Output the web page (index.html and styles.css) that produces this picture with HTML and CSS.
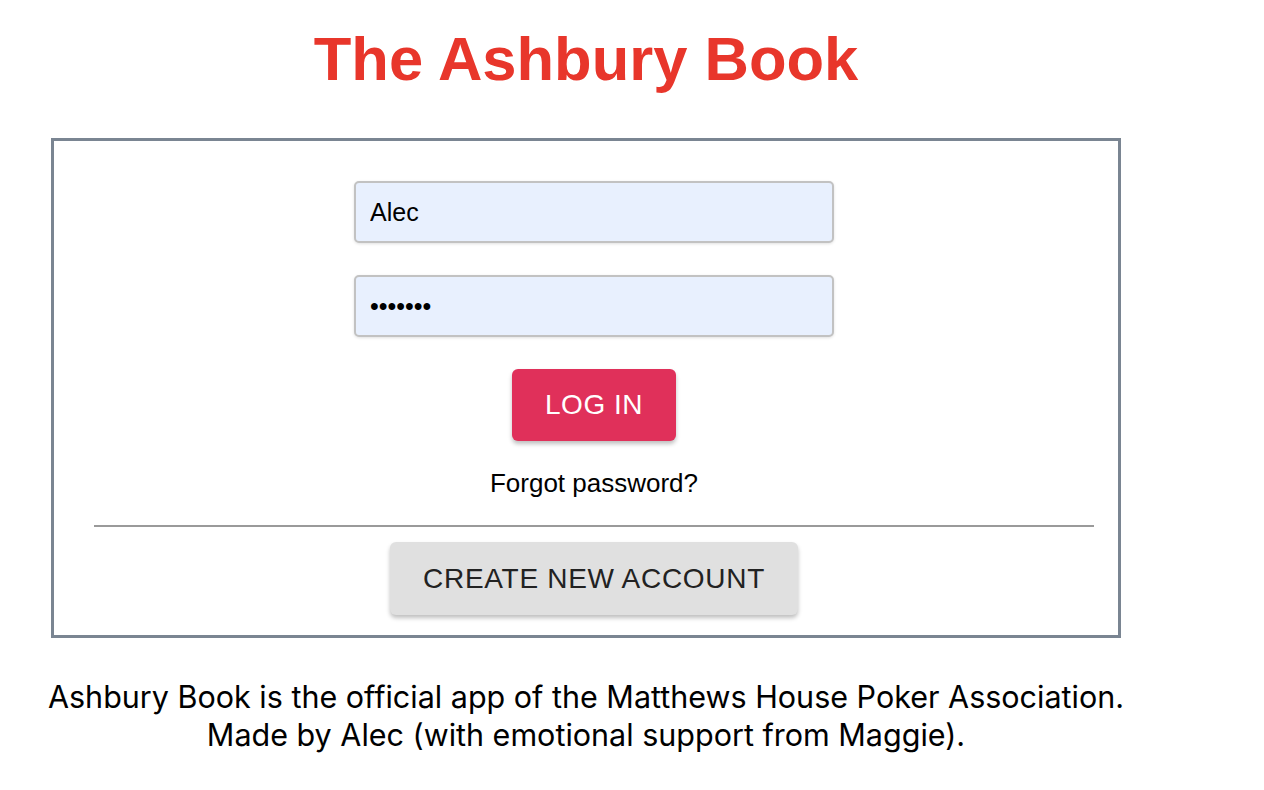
FILE: index.html
```html
<!DOCTYPE html>
<html>
<head>
<meta charset="utf-8">
<link rel="stylesheet" href="styles.css">
</head>
<body>
<div class="page">
  <h1 class="title">The Ashbury Book</h1>
  <div class="card">
    <div class="inner">
      <input class="field" type="text" value="Alec">
      <input class="field pw" type="password" value="1234567">
      <button class="btn-login">LOG IN</button>
      <a class="forgot">Forgot password?</a>
      <hr class="divider">
      <button class="btn-create">CREATE NEW ACCOUNT</button>
    </div>
  </div>
  <p class="footer">Ashbury Book is the official app of the Matthews House Poker Association.<br>Made by Alec (with emotional support from Maggie).</p>
</div>
</body>
</html>
```
FILE: styles.css
```css
html, body { margin: 0; padding: 0; background: #fff; }
body { font-family: "Liberation Sans", Arial, sans-serif; color: #000; }
.page { width: 1172px; display: flex; flex-direction: column; align-items: center; }
.title {
  margin: 23px 0 43px;
  font-size: 61.5px;
  line-height: 72px;
  font-weight: bold;
  color: #e8362b;
}
.card {
  width: 1064px;
  border: 3px solid #7a8592;
  box-sizing: content-box;
}
.inner {
  width: 1000px;
  margin-left: 40px;
  padding: 40px 0 20px;
  display: flex;
  flex-direction: column;
  align-items: center;
}
.field {
  width: 480px;
  height: 62px;
  box-sizing: border-box;
  border: 2px solid #c2c2c2;
  border-radius: 5px;
  background: #e8f0fe;
  padding: 0 14px;
  font-family: "Liberation Sans", Arial, sans-serif;
  font-size: 25px;
  color: #000;
  margin: 0 0 32px;
  box-shadow: 0 1px 3px rgba(0,0,0,0.12);
  outline: none;
}
.pw { font-size: 25px; letter-spacing: 0; }
.btn-login {
  width: 164px;
  height: 72px;
  border: none;
  border-radius: 6px;
  background: #e0305a;
  color: #fff;
  font-family: "Liberation Sans", Arial, sans-serif;
  font-size: 28px;
  letter-spacing: 0.5px;
  box-shadow: 0 3px 4px rgba(0,0,0,0.25);
  margin: 0;
  padding: 0;
}
.forgot {
  margin-top: 27px;
  font-size: 26px;
  line-height: 30px;
  color: #000;
}
.divider {
  width: 1000px;
  margin: 27px 0 15px;
  border: none;
  height: 2px;
  background: #9a9a9a;
}
.btn-create {
  width: 408px;
  height: 73px;
  border: none;
  border-radius: 6px;
  background: #e0e0e0;
  color: #222;
  font-family: "Liberation Sans", Arial, sans-serif;
  font-size: 28px;
  letter-spacing: 0.7px;
  box-shadow: 0 3px 4px rgba(0,0,0,0.25);
  margin: 0;
  padding: 0;
}
.footer {
  margin: 40px 0 0;
  text-align: center;
  font-family: Inter, "Liberation Sans", sans-serif;
  font-size: 30.5px;
  line-height: 38px;
  color: #000;
}
```
